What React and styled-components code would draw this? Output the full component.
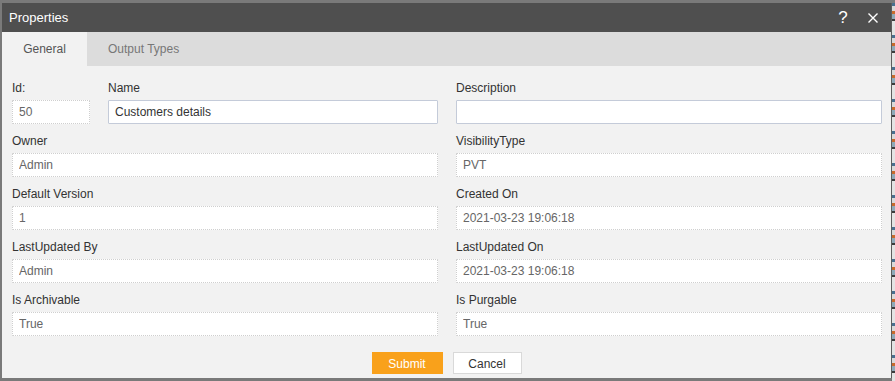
import React from 'react'
import styled, { createGlobalStyle } from 'styled-components'

const GlobalStyle = createGlobalStyle`
    html, body {
        margin: 0;
        padding: 0;
        background: #7c7c7c;
        font-family: Arial, "Liberation Sans", sans-serif;
        overflow: hidden;
    }
`

const Page = styled.div`
    display: flex;
    width: 895px;
    height: 381px;
    background: #7a7a7a;
`

const Backdrop = styled.div`
    flex: 1;
    margin-top: 3px;
    background: repeating-linear-gradient(
        180deg,
        #4a6f8f 0px, #4a6f8f 3px,
        #d9d9d9 3px, #d9d9d9 8px,
        #c86a2c 8px, #c86a2c 11px,
        #8fa9b8 11px, #8fa9b8 16px,
        #3c3c3c 16px, #3c3c3c 18px,
        #e3e3e3 18px, #e3e3e3 32px
    );
`

const Dialog = styled.div`
    display: flex;
    flex-direction: column;
    width: 889px;
    height: 375px;
    margin: 3px 1px 0 2px;
    background: #f2f2f2;
    box-shadow: 1px 0 0 #5e5e5e;
`

const TitleBar = styled.div`
    display: flex;
    align-items: center;
    height: 29px;
    padding: 0 6px 0 7px;
    background: #4f4f4f;
    color: #fff;
`

const Title = styled.div`
    flex: 1;
    font-size: 13px;
`

const TitleButton = styled.button`
    display: flex;
    align-items: center;
    justify-content: center;
    width: 24px;
    height: 24px;
    margin-left: ${p => p.$gap || 0}px;
    padding: 0;
    border: 0;
    background: none;
    color: #fff;
    font-family: Arial, "Liberation Sans", sans-serif;
    font-size: 17px;
    cursor: pointer;
`

const TabBar = styled.div`
    display: flex;
    height: 34px;
    background: #dcdcdc;
`

const Tab = styled.div`
    display: flex;
    align-items: center;
    justify-content: center;
    padding: 0 21px;
    min-width: ${p => p.$active ? 43 : 70}px;
    font-size: 12px;
    color: ${p => p.$active ? '#555' : '#777'};
    background: ${p => p.$active ? '#f2f2f2' : 'transparent'};
`

const Body = styled.div`
    display: grid;
    grid-template-columns: 426px 426px;
    column-gap: 18px;
    row-gap: 9px;
    padding: 14px 9px 0 10px;
`

const Pair = styled.div`
    display: flex;
    gap: 18px;
`

const Field = styled.div`
    display: flex;
    flex-direction: column;
    width: ${p => p.$width ? `${p.$width}px` : 'auto'};
    flex: ${p => p.$width ? 'none' : 1};
`

const Label = styled.label`
    height: 16px;
    line-height: 16px;
    margin-bottom: 4px;
    font-size: 12px;
    color: #333;
`

const Input = styled.input`
    box-sizing: border-box;
    width: 100%;
    height: 24px;
    padding: 0 6px;
    border: 1px ${p => p.readOnly ? 'dotted #cfcfcf' : 'solid #c4cbd9'};
    border-radius: 1px;
    background: #fff;
    font-family: Arial, "Liberation Sans", sans-serif;
    font-size: 12px;
    color: ${p => p.readOnly ? '#666' : '#333'};
    outline: none;
`

const Footer = styled.div`
    display: flex;
    justify-content: center;
    gap: 10px;
    padding-top: 16px;
`

const Button = styled.button`
    box-sizing: border-box;
    height: 22px;
    min-width: ${p => p.$primary ? 71 : 69}px;
    padding: 1px 12px 0;
    border: 1px solid ${p => p.$primary ? '#f9a11b' : '#d9d9d9'};
    background: ${p => p.$primary ? '#f9a11b' : '#fff'};
    color: ${p => p.$primary ? '#fff' : '#333'};
    font-family: Arial, "Liberation Sans", sans-serif;
    font-size: 12px;
    cursor: pointer;
`

const CloseIcon = () => (
    <svg width="10" height="10" viewBox="0 0 10 10">
        <path d="M0.5 0.5 L9.5 9.5 M9.5 0.5 L0.5 9.5" stroke="#fff" strokeWidth="1.4" />
    </svg>
)

const fields = [
    ['Owner', 'Admin', 'VisibilityType', 'PVT'],
    ['Default Version', '1', 'Created On', '2021-03-23 19:06:18'],
    ['LastUpdated By', 'Admin', 'LastUpdated On', '2021-03-23 19:06:18'],
    ['Is Archivable', 'True', 'Is Purgable', 'True'],
]

const ReadOnly = ({ label, value }) => (
    <Field>
        <Label>{label}</Label>
        <Input readOnly value={value} />
    </Field>
)

export default function App() {
    return (
        <Page>
            <GlobalStyle />
            <Dialog>
                <TitleBar>
                    <Title>Properties</Title>
                    <TitleButton>?</TitleButton>
                    <TitleButton $gap={6}><CloseIcon /></TitleButton>
                </TitleBar>
                <TabBar>
                    <Tab $active>General</Tab>
                    <Tab>Output Types</Tab>
                </TabBar>
                <Body>
                    <Pair>
                        <Field $width={78}>
                            <Label>Id:</Label>
                            <Input readOnly value="50" />
                        </Field>
                        <Field>
                            <Label>Name</Label>
                            <Input defaultValue="Customers details" />
                        </Field>
                    </Pair>
                    <Field>
                        <Label>Description</Label>
                        <Input defaultValue="" />
                    </Field>
                    {fields.map(([l1, v1, l2, v2]) => (
                        <React.Fragment key={l1}>
                            <ReadOnly label={l1} value={v1} />
                            <ReadOnly label={l2} value={v2} />
                        </React.Fragment>
                    ))}
                </Body>
                <Footer>
                    <Button $primary>Submit</Button>
                    <Button>Cancel</Button>
                </Footer>
            </Dialog>
            <Backdrop />
        </Page>
    )
}
